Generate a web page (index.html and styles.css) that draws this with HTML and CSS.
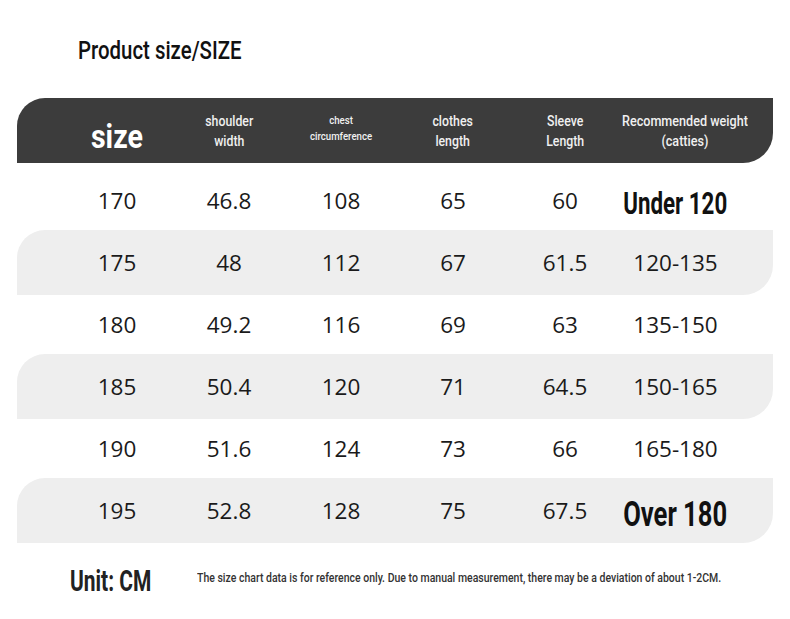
FILE: index.html
```html
<!DOCTYPE html>
<html lang="en">
<head>
<meta charset="utf-8">
<title>Product size chart</title>
<link rel="stylesheet" href="styles.css">
</head>
<body>
<div class="page">
  <h1 class="title"><span class="sq sq-title">Product size/SIZE</span></h1>
  <div class="chart">
    <div class="head">
      <div class="hc hc-size"><span class="sq sq-size">size</span></div>
      <div class="hc"><span class="sq sq-h">shoulder<br>width</span></div>
      <div class="hc hc-small"><span class="sq sq-hs">chest<br>circumference</span></div>
      <div class="hc"><span class="sq sq-h">clothes<br>length</span></div>
      <div class="hc"><span class="sq sq-h">Sleeve<br>Length</span></div>
      <div class="hc hc-last"><span class="sq sq-hl">Recommended weight<br>(catties)</span></div>
    </div>
    <div class="rows">
      <div class="row">
        <div class="c">170</div><div class="c">46.8</div><div class="c">108</div><div class="c">65</div><div class="c">60</div><div class="c c-bold"><span class="sq sq-under">Under 120</span></div>
      </div>
      <div class="row alt">
        <div class="c">175</div><div class="c">48</div><div class="c">112</div><div class="c">67</div><div class="c">61.5</div><div class="c">120-135</div>
      </div>
      <div class="row">
        <div class="c">180</div><div class="c">49.2</div><div class="c">116</div><div class="c">69</div><div class="c">63</div><div class="c">135-150</div>
      </div>
      <div class="row alt">
        <div class="c">185</div><div class="c">50.4</div><div class="c">120</div><div class="c">71</div><div class="c">64.5</div><div class="c">150-165</div>
      </div>
      <div class="row">
        <div class="c">190</div><div class="c">51.6</div><div class="c">124</div><div class="c">73</div><div class="c">66</div><div class="c">165-180</div>
      </div>
      <div class="row alt">
        <div class="c">195</div><div class="c">52.8</div><div class="c">128</div><div class="c">75</div><div class="c">67.5</div><div class="c c-big"><span class="sq sq-over">Over 180</span></div>
      </div>
    </div>
  </div>
  <div class="foot">
    <div class="unit"><span class="sq sq-unit">Unit: CM</span></div>
    <div class="note"><span class="sq sq-note">The size chart data is for reference only. Due to manual measurement, there may be a deviation of about 1-2CM.</span></div>
  </div>
</div>
</body>
</html>
```
FILE: styles.css
```css
html, body {
  margin: 0;
  padding: 0;
  background: #ffffff;
}

.page {
  width: 790px;
  height: 619px;
  padding-top: 34px;
  box-sizing: border-box;
  font-family: Roboto, "Noto Sans", sans-serif;
  color: #111111;
  overflow: hidden;
}

.sq {
  display: inline-block;
  white-space: nowrap;
  text-align: center;
  transform-origin: center center;
  flex-shrink: 0;
}

.title {
  margin: 0 0 0 78px;
  font-size: 26.5px;
  font-weight: 500;
  line-height: 32px;
  height: 32px;
  color: #111111;
}

.sq-title {
  transform-origin: left center;
  transform: scaleX(0.77);
}

.chart {
  margin: 32px 17px 0 17px;
}

.head {
  height: 65px;
  background: #3c3c3c;
  border-radius: 28px 0 30px 0;
  display: grid;
  grid-template-columns: repeat(6, 112px);
  padding-left: 44px;
  align-items: center;
  color: #f0f0f0;
}

.hc {
  display: flex;
  justify-content: center;
  font-size: 15px;
  font-weight: 500;
  line-height: 20px;
  white-space: nowrap;
}

.hc-last {
  margin-left: 15px;
}

.sq-h {
  transform: scaleX(0.82);
}

.sq-hl {
  transform: scaleX(0.84);
}

.hc-size {
  font-size: 34px;
  line-height: 40px;
  font-weight: 700;
  color: #ffffff;
  padding-top: 10px;
}

.sq-size {
  transform: scaleX(0.84);
}

.hc-small {
  font-size: 11.5px;
  line-height: 16px;
  padding-bottom: 6px;
}

.sq-hs {
  transform: scaleX(0.84);
}

.rows {
  margin-top: 8px;
}

.row {
  height: 59px;
  display: grid;
  grid-template-columns: repeat(6, 112px);
  padding-left: 44px;
  align-items: center;
}

.row.alt {
  height: 65px;
  background: #eeeeee;
  border-radius: 28px 0 30px 0;
}

.c {
  display: flex;
  justify-content: center;
  font-family: "Open Sans", "Noto Sans", sans-serif;
  font-size: 22.5px;
  color: #1a1a1a;
  white-space: nowrap;
}

.c:last-child {
  margin-right: 3px;
}

.c-bold {
  font-family: Roboto, "Noto Sans", sans-serif;
  font-weight: 700;
  font-size: 31px;
  line-height: 36px;
  color: #111111;
  padding-top: 6px;
}

.sq-under {
  transform: scaleX(0.72);
}

.c-big {
  font-family: Roboto, "Noto Sans", sans-serif;
  font-weight: 700;
  font-size: 35px;
  line-height: 40px;
  color: #111111;
  padding-top: 8px;
}

.sq-over {
  transform: scaleX(0.73);
}

.foot {
  display: flex;
  align-items: center;
  margin-top: 20px;
  height: 36px;
}

.unit {
  flex: 0 0 127px;
  margin-left: 70px;
  font-size: 29.5px;
  font-weight: 700;
  color: #222222;
  white-space: nowrap;
}

.sq-unit {
  transform-origin: left center;
  transform: scaleX(0.71);
}

.note {
  flex: 0 0 auto;
  font-size: 12.7px;
  font-weight: 500;
  color: #333333;
  padding-bottom: 8px;
  white-space: nowrap;
}

.sq-note {
  transform-origin: left center;
  transform: scaleX(0.827);
}
```
